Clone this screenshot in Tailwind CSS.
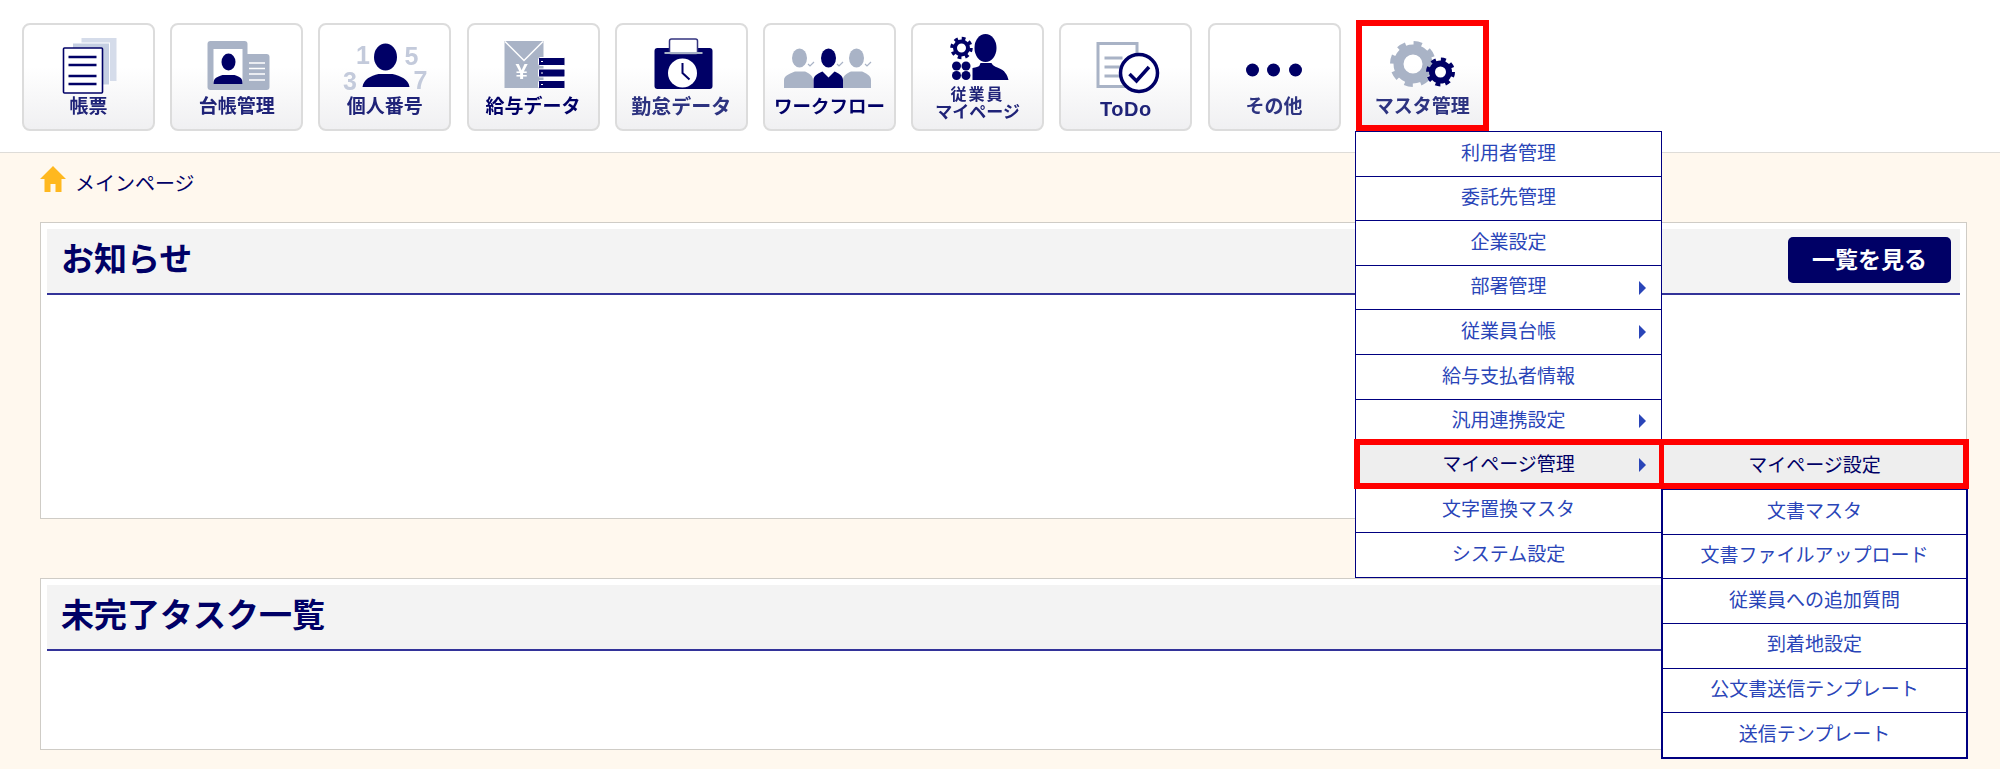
<!DOCTYPE html>
<html lang="ja">
<head>
    <meta charset="UTF-8">
    <title>メインページ</title>
    <script src="https://cdn.jsdelivr.net/npm/@tailwindcss/browser@4"></script>
</head>
<body class="relative h-[769px] overflow-hidden bg-white font-['Liberation_Sans','Noto_Sans_CJK_JP',sans-serif] text-[#000066]">

    <!-- Top menu -->
    <header class="flex h-[153px] items-end gap-[15.2px] border-b border-[#dedcd8] pb-[21px] pl-[22px]">
        <a href="#" class="flex h-[108px] w-[133px] flex-col items-center rounded-lg border-2 border-[#dcdcdc] bg-gradient-to-b from-white from-40% to-[#f0f0f2] pt-2">
            <svg class="h-[64px] w-[90px] shrink-0 overflow-visible blur-[0.3px]" viewBox="0 0 90 64">
                <rect x="37.5" y="5" width="35" height="43" fill="#d5dcea"/>
                <rect x="28.5" y="10" width="37" height="42" fill="#c5cfe2" stroke="#fff"/>
                <rect x="19.5" y="15" width="39" height="45" rx="1" fill="#fff" stroke="#000066" stroke-width="1.6"/>
                <path d="M24.5 24h28M24.5 32h28M24.5 43h28M24.5 51h28" stroke="#000066" stroke-width="2.6"/>
            </svg>
            <span class="text-[19px] leading-[20px] font-bold text-[#1f2378] blur-[0.3px]">帳票</span>
        </a>
        <a href="#" class="flex h-[108px] w-[133px] flex-col items-center rounded-lg border-2 border-[#dcdcdc] bg-gradient-to-b from-white from-40% to-[#f0f0f2] pt-2">
            <svg class="h-[64px] w-[90px] shrink-0 overflow-visible blur-[0.3px]" viewBox="0 0 90 64">
                <rect x="15.5" y="8" width="40" height="49" rx="3" fill="#a9b3c6"/>
                <rect x="48" y="21" width="29.5" height="36" rx="3" fill="#a9b3c6"/>
                <rect x="21.5" y="16" width="29" height="35" fill="#fff"/>
                <ellipse cx="36.5" cy="29" rx="7" ry="8.5" fill="#000066"/>
                <path d="M21.5 51c0-6 3-7 9-9h12c6 2 8 3 8 9z" fill="#000066"/>
                <path d="M57 30h16M57 35.500h16M57 41h16M57 47h16" stroke="#fff" stroke-width="1.300"/>
            </svg>
            <span class="text-[19px] leading-[20px] font-bold text-[#1f2378] blur-[0.3px]">台帳管理</span>
        </a>
        <a href="#" class="flex h-[108px] w-[133px] flex-col items-center rounded-lg border-2 border-[#dcdcdc] bg-gradient-to-b from-white from-40% to-[#f0f0f2] pt-2">
            <svg class="h-[64px] w-[90px] shrink-0 overflow-visible blur-[0.3px]" viewBox="0 0 90 64">
                <g fill="#c3cadb" font-family="Liberation Sans" font-size="25" font-weight="700" text-anchor="middle">
                    <text x="23" y="31">1</text>
                    <text x="71.500" y="32">5</text>
                    <text x="10" y="57">3</text>
                    <text x="80.500" y="56">7</text>
                </g>
                <ellipse cx="45.500" cy="24" rx="11.500" ry="13.500" fill="#000066"/>
                <path d="M22.500 54c1-8 8-11 16-13h14c8 2 16 5 17 13z" fill="#000066"/>
            </svg>
            <span class="text-[19px] leading-[20px] font-bold text-[#1f2378] blur-[0.3px]">個人番号</span>
        </a>
        <a href="#" class="flex h-[108px] w-[133px] flex-col items-center rounded-lg border-2 border-[#dcdcdc] bg-gradient-to-b from-white from-40% to-[#f0f0f2] pt-2">
            <svg class="h-[64px] w-[90px] shrink-0 overflow-visible blur-[0.3px]" viewBox="0 0 90 64">
                <rect x="16.500" y="8" width="39" height="47" fill="#a9b3c6"/>
                <path d="M17 8.500l19 19 19-19" fill="none" stroke="#fff" stroke-width="1.500"/>
                <text x="33.500" y="46" fill="#fff" font-family="Liberation Sans" font-size="22" font-weight="700" text-anchor="middle">¥</text>
                <g fill="#000066" stroke="#fff">
                    <rect x="50.500" y="24.500" width="26.500" height="8" rx="1"/>
                    <rect x="50.500" y="36" width="26.500" height="8" rx="1"/>
                    <rect x="50.500" y="47.500" width="26.500" height="8" rx="1"/>
                </g>
                <path d="M53 28.500h2M53 40h2M53 51.500h2" stroke="#fff"/>
            </svg>
            <span class="text-[19px] leading-[20px] font-bold text-[#000066] blur-[0.3px]">給与データ</span>
        </a>
        <a href="#" class="flex h-[108px] w-[133px] flex-col items-center rounded-lg border-2 border-[#dcdcdc] bg-gradient-to-b from-white from-40% to-[#f0f0f2] pt-2">
            <svg class="h-[64px] w-[90px] shrink-0 overflow-visible blur-[0.3px]" viewBox="0 0 90 64">
                <rect x="18.500" y="15" width="58" height="41" rx="3" fill="#000066"/>
                <rect x="33.500" y="6" width="28" height="15" rx="2" fill="#fff" stroke="#33337f" stroke-width="1.500"/>
                <path d="M28.500 20h38" stroke="#a9b3c6" stroke-width="2"/>
                <circle cx="46.500" cy="40" r="14.500" fill="#fff"/>
                <path d="M46.500 30v10l7 6.500" fill="none" stroke="#000066" stroke-width="2"/>
            </svg>
            <span class="text-[20px] leading-[20px] font-bold text-[#2d3380] blur-[0.3px]">勤怠データ</span>
        </a>
        <a href="#" class="flex h-[108px] w-[133px] flex-col items-center rounded-lg border-2 border-[#dcdcdc] bg-gradient-to-b from-white from-40% to-[#f0f0f2] pt-2">
            <svg class="h-[64px] w-[90px] shrink-0 overflow-visible blur-[0.3px]" viewBox="0 0 90 64">
                <ellipse cx="15.500" cy="25" rx="7.500" ry="9.500" fill="#a9b3c6"/>
                <path d="M0 55v-8c0-5 8-7 11-8.500h10c3 1.500 8 3.500 8 8.500v8z" fill="#a9b3c6"/>
                <ellipse cx="72.500" cy="25" rx="7.500" ry="9.500" fill="#a9b3c6"/>
                <path d="M59 55v-8c0-5 5-7 8-8.500h11c3 1.500 9 3.500 9 8.500v8z" fill="#a9b3c6"/>
                <ellipse cx="44.500" cy="25" rx="7.500" ry="9.500" fill="#000066"/>
                <path d="M29.500 55v-8c0-5 6-7 9-8.500l6 6 6-6c3 1.500 8.500 3.500 8.500 8.500v8z" fill="#000066"/>
                <path d="M24 31l2 2 4-4M53 31l2 2 4-4M81 31l2 2 4-4" fill="none" stroke="#a9b3c6" stroke-width="1.200"/>
            </svg>
            <span class="text-[18.500px] leading-[20px] font-bold text-[#000066] blur-[0.3px]">ワークフロー</span>
        </a>
        <a href="#" class="flex h-[108px] w-[133px] flex-col items-center rounded-lg border-2 border-[#dcdcdc] bg-gradient-to-b from-white from-40% to-[#f0f0f2] pt-2">
            <svg class="h-[52px] w-[90px] shrink-0 overflow-visible blur-[0.3px]" viewBox="0 0 90 52">
                <circle cx="28.500" cy="15" r="6.500" fill="none" stroke="#000066" stroke-width="4"/>
                <circle cx="28.500" cy="15" r="9.500" fill="none" stroke="#000066" stroke-width="3.500" stroke-dasharray="3.700 3.750"/>
                <g fill="#000066">
                    <circle cx="23.500" cy="33" r="4.500"/>
                    <circle cx="33" cy="33" r="4.500"/>
                    <circle cx="23.500" cy="42.500" r="4.500"/>
                    <circle cx="33" cy="42.500" r="4.500"/>
                    <ellipse cx="52.500" cy="15" rx="11" ry="14"/>
                    <path d="M39.500 47V35c8-1 7-3 8-5h11c1 2 2 3 7 5 6 2 9 7 10 12z"/>
                </g>
            </svg>
            <span class="mt-px text-[16px] leading-[18px] font-bold tracking-[2px] text-[#1f2378] blur-[0.3px]">従業員</span>
            <span class="text-[17px] leading-[18px] font-bold text-[#1f2378] blur-[0.3px]">マイページ</span>
        </a>
        <a href="#" class="flex h-[108px] w-[133px] flex-col items-center rounded-lg border-2 border-[#dcdcdc] bg-gradient-to-b from-white from-40% to-[#f0f0f2] pt-2">
            <svg class="h-[64px] w-[90px] shrink-0 overflow-visible blur-[0.3px]" viewBox="0 0 90 64">
                <rect x="17" y="10.500" width="39" height="43" fill="#fff" stroke="#a9b3c6" stroke-width="3"/>
                <path d="M23.500 25h18M23.500 34h18M23.500 43h18" stroke="#a9b3c6" stroke-width="3"/>
                <circle cx="58" cy="40" r="18.500" fill="#fff" stroke="#000066" stroke-width="3.500"/>
                <path d="M48.500 41l7 7L68 34" fill="none" stroke="#000066" stroke-width="3.500"/>
            </svg>
            <span class="mt-[2px] text-[20px] leading-[20px] font-bold tracking-[0.5px] text-[#1f2378] blur-[0.3px]">ToDo</span>
        </a>
        <a href="#" class="flex h-[108px] w-[133px] flex-col items-center rounded-lg border-2 border-[#dcdcdc] bg-gradient-to-b from-white from-40% to-[#f0f0f2] pt-2">
            <svg class="h-[64px] w-[90px] shrink-0 overflow-visible blur-[0.3px]" viewBox="0 0 90 64">
                <g fill="#000066">
                    <circle cx="23.500" cy="37" r="6.500"/>
                    <circle cx="44.500" cy="37" r="6.500"/>
                    <circle cx="66.500" cy="37" r="6.500"/>
                </g>
            </svg>
            <span class="text-[19px] leading-[20px] font-bold text-[#2d3380] blur-[0.3px]">その他</span>
        </a>
        <a href="#" class="flex h-[111px] w-[133px] flex-col items-center border-[6px] border-[#ff0000] bg-gradient-to-b from-white from-40% to-[#f0f0f2] pt-[7px]">
            <svg class="h-[64px] w-[90px] shrink-0 overflow-visible blur-[0.3px]" viewBox="0 0 90 64">
                <circle cx="36" cy="31" r="14.500" fill="none" stroke="#a9b3c6" stroke-width="10"/>
                <circle cx="36" cy="31" r="20" fill="none" stroke="#a9b3c6" stroke-width="6" stroke-dasharray="8 7.700"/>
                <circle cx="63.500" cy="39" r="8.500" fill="#fff"/>
                <circle cx="63.500" cy="39" r="8.500" fill="none" stroke="#000066" stroke-width="6"/>
                <circle cx="63.500" cy="39" r="12.500" fill="none" stroke="#000066" stroke-width="4" stroke-dasharray="4.900 4.920"/>
            </svg>
            <span class="text-[19px] leading-[20px] font-bold text-[#2d3380] blur-[0.3px]">マスタ管理</span>
        </a>
    </header>

    <!-- Main content -->
    <main class="h-[616px] bg-[#fff8ee] pr-[33px] pl-[40px]">
        <div class="flex h-[69px] items-start pt-[13px] text-[20px] leading-[34px]">
            <svg class="mr-[9px] h-[26px] w-[26px]" viewBox="0 0 26 26"><path d="M13 0L26 13H21.500V26H15.500V18H10.500V26H4.500V13H0Z" fill="#ffb81f"/></svg>
            <span class="mt-[1px]">メインページ</span>
        </div>

        <section class="h-[297px] border border-[#cfccc6] bg-white p-[6px]">
            <div class="flex h-[66px] items-center justify-between border-b-2 border-[#333399] bg-[#f3f3f3] pr-[9px] pl-[14px]">
                <h2 class="-mt-[2px] text-[33px] font-bold">お知らせ</h2>
                <button class="-mt-[2px] h-[46px] w-[163px] rounded-[5px] bg-[#000066] text-[23px] font-bold text-white">一覧を見る</button>
            </div>
        </section>

        <section class="mt-[59px] h-[172px] border border-[#cfccc6] bg-white p-[6px]">
            <div class="flex h-[66px] items-center border-b-2 border-[#333399] bg-[#f3f3f3] pl-[14px]">
                <h2 class="-mt-[3px] text-[33px] font-bold">未完了タスク一覧</h2>
            </div>
        </section>
    </main>

    <!-- Dropdown -->
    <ul class="absolute top-[131px] left-[1355px] w-[307px] border-x border-b border-[#000080] bg-white text-[19px] text-[#2a45b8]">
        <li class="flex h-[44.600px] items-center justify-center border-t border-[#000080]">利用者管理</li>
        <li class="flex h-[44.600px] items-center justify-center border-t border-[#000080]">委託先管理</li>
        <li class="flex h-[44.600px] items-center justify-center border-t border-[#000080]">企業設定</li>
        <li class="relative flex h-[44.600px] items-center justify-center border-t border-[#000080]">部署管理<span class="absolute right-[15px] h-0 w-0 border-y-[7px] border-l-[7px] border-y-transparent border-l-[#2a45b8]"></span></li>
        <li class="relative flex h-[44.600px] items-center justify-center border-t border-[#000080]">従業員台帳<span class="absolute right-[15px] h-0 w-0 border-y-[7px] border-l-[7px] border-y-transparent border-l-[#2a45b8]"></span></li>
        <li class="flex h-[44.600px] items-center justify-center border-t border-[#000080]">給与支払者情報</li>
        <li class="relative flex h-[44.600px] items-center justify-center border-t border-[#000080]">汎用連携設定<span class="absolute right-[15px] h-0 w-0 border-y-[7px] border-l-[7px] border-y-transparent border-l-[#2a45b8]"></span></li>
        <li class="relative flex h-[44.600px] items-center justify-center bg-[#eeeeee] text-[#000066]">マイページ管理<span class="absolute right-[15px] h-0 w-0 border-y-[7px] border-l-[7px] border-y-transparent border-l-[#2a45b8]"></span>
            <span class="absolute -top-[4px] -right-[1px] -bottom-[1px] -left-[2px] border-[6px] border-r-[3px] border-[#ff0000]"></span>
            <!-- Submenu -->
            <ul class="absolute top-0 left-full w-[307px] border-x-2 border-b-2 border-[#000080] bg-white text-[#2a45b8]">
                <li class="relative flex h-[46px] items-center justify-center bg-[#eeeeee] text-[#000066]">マイページ設定
                    <span class="absolute -top-[4px] -right-[3px] bottom-0 -left-[2px] border-[6px] border-l-[3px] border-[#ff0000]"></span>
                </li>
                <li class="flex h-[44.600px] items-center justify-center border-t border-[#000080]">文書マスタ</li>
                <li class="flex h-[44.600px] items-center justify-center border-t border-[#000080]">文書ファイルアップロード</li>
                <li class="flex h-[44.600px] items-center justify-center border-t border-[#000080]">従業員への追加質問</li>
                <li class="flex h-[44.600px] items-center justify-center border-t border-[#000080]">到着地設定</li>
                <li class="flex h-[44.600px] items-center justify-center border-t border-[#000080]">公文書送信テンプレート</li>
                <li class="flex h-[44.600px] items-center justify-center border-t border-[#000080]">送信テンプレート</li>
            </ul>
        </li>
        <li class="flex h-[44.600px] items-center justify-center border-t border-[#000080]">文字置換マスタ</li>
        <li class="flex h-[44.600px] items-center justify-center border-t border-[#000080]">システム設定</li>
    </ul>

</body>
</html>
